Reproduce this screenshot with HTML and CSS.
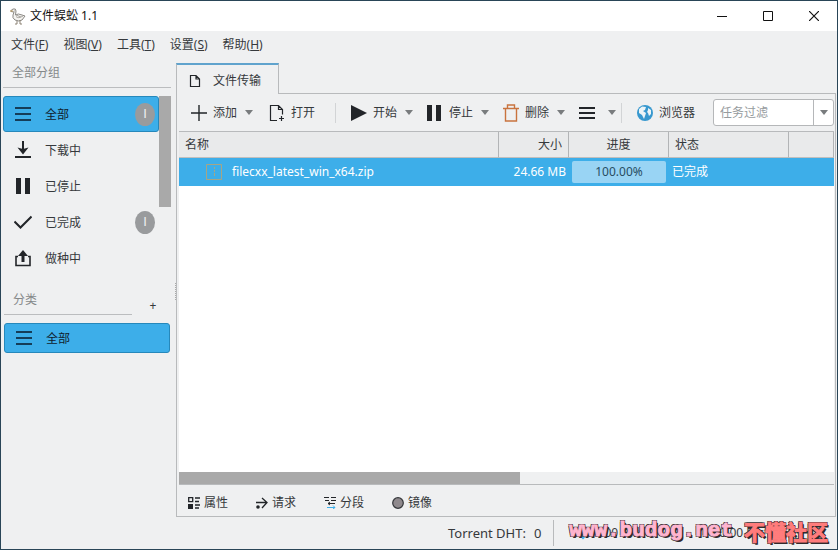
FILE: index.html
```html
<!DOCTYPE html>
<html lang="zh-CN">
<head>
<meta charset="utf-8">
<title>文件蜈蚣 1.1</title>
<link rel="stylesheet" href="styles.css">
</head>
<body>
<div class="window">
  <header class="titlebar">
    <svg class="logo" viewBox="0 0 18 18" width="18" height="18"><path d="M2 3.500 4 2Q7 1 7 4L6.500 8Q9 6 13 8L16 9 13 13Q10 15 6 13 3 11 4 8L5 5 2 4.500Z" fill="#f4f3f0" stroke="#8b8985"/><path d="M7 9.500Q9 12 14 9M7 8l5 2M5 4h1" fill="none" stroke="#aaa7a2"/><path d="M8 14v3h-2M11 13v4h2" fill="none" stroke="#8b8172"/><path d="M1 4h3" stroke="#bd9d61"/></svg>
    <h1 class="title">文件蜈蚣 1.1</h1>
    <div class="controls">
      <button class="control" aria-label="最小化"><svg viewBox="0 0 10 10" width="10" height="10"><path d="M0 5.500h10" stroke="#111"/></svg></button>
      <button class="control" aria-label="最大化"><svg viewBox="0 0 10 10" width="10" height="10"><path d="M.5.5h9v9h-9z" fill="none" stroke="#111"/></svg></button>
      <button class="control" aria-label="关闭"><svg viewBox="0 0 10 10" width="10" height="10"><path d="m0 0 10 10M10 0 0 10" stroke="#111" stroke-width="1.200"/></svg></button>
    </div>
  </header>
  <nav class="menubar">
    <button>文件(<u>F</u>)</button><button>视图(<u>V</u>)</button><button>工具(<u>T</u>)</button><button>设置(<u>S</u>)</button><button>帮助(<u>H</u>)</button>
  </nav>
  <div class="workspace">
    <aside class="sidebar">
      <h2 class="group-title">全部分组</h2>
      <div class="group-scroll">
        <div class="group-list">
          <button class="group selected"><svg viewBox="0 0 18 18" width="18" height="18"><path d="M1 3h16M1 9h16M1 15h16" stroke="#153d58" stroke-width="2"/></svg><span>全部</span><b class="badge">I</b></button>
          <button class="group"><svg viewBox="0 0 18 18" width="18" height="18"><path d="M9 0v9M1 16h16" stroke="#222529" stroke-width="2"/><path d="m3.500 6.500 5.500 7 5.500-7-5.500 1.500z" fill="#222529"/></svg><span>下载中</span></button>
          <button class="group"><svg viewBox="0 0 18 18" width="18" height="18"><path d="M2 1h5v16H2zM11 1h5v16h-5z" fill="#222529"/></svg><span>已停止</span></button>
          <button class="group"><svg viewBox="0 0 18 18" width="18" height="18"><path d="m.5 8.500 6 6 11-11" fill="none" stroke="#222529" stroke-width="2"/></svg><span>已完成</span><b class="badge">I</b></button>
          <button class="group"><svg viewBox="0 0 18 18" width="18" height="18"><path d="M4 7.500H2v9h14v-9h-2" fill="none" stroke="#222529" stroke-width="1.600"/><path d="M9 13V4" stroke="#222529" stroke-width="3"/><path d="m9 1 5 6H4z" fill="#222529"/></svg><span>做种中</span></button>
        </div>
        <div class="group-thumb"></div>
      </div>
      <div class="category-head"><h2 class="category-title">分类</h2><button class="add-category" aria-label="添加分类">+</button></div>
      <button class="category"><svg viewBox="0 0 18 18" width="18" height="18"><path d="M1 3h16M1 9h16M1 15h16" stroke="#153d58" stroke-width="2"/></svg><span>全部</span></button>
      <i class="splitter"></i>
    </aside>
    <main class="content">
      <div class="tabs"><button class="tab"><svg viewBox="0 0 12 14" width="12" height="14"><path d="M1.500 1.500H7L10.500 5v7.500h-9zM7 1.500V5h3.500" fill="none" stroke="#222529" stroke-width="1.200"/></svg>文件传输</button></div>
      <section class="panel">
        <div class="toolbar">
          <button class="tool add"><svg viewBox="0 0 16 16" width="16" height="16"><path d="M8 0v16M0 8h16" stroke="#222529" stroke-width="1.400"/></svg>添加<i class="caret"></i></button>
          <button class="tool open"><svg viewBox="0 0 16 18" width="16" height="18"><path d="M8 16.500H1.500v-15h8l4 4v5M9.500 1.500v4h4M12.500 12v5M10 14.500h5" fill="none" stroke="#222529" stroke-width="1.200"/></svg>打开</button>
          <i class="separator"></i>
          <button class="tool start"><svg viewBox="0 0 16 16" width="16" height="16"><path d="m0 0 16 8-16 8z" fill="#222529"/></svg>开始<i class="caret"></i></button>
          <button class="tool stop"><svg viewBox="0 0 16 16" width="16" height="16"><path d="M0 0h5v16H0zM9 0h5v16H9z" fill="#222529"/></svg>停止<i class="caret"></i></button>
          <button class="tool remove"><svg viewBox="0 0 16 18" width="16" height="18"><path d="M0 4.500h16M4.500 4V1h7v3M2.500 5v12h11V5" fill="none" stroke="#c9733e" stroke-width="1.400"/></svg>删除<i class="caret"></i></button>
          <button class="tool more" aria-label="更多"><svg viewBox="0 0 16 16" width="16" height="16"><path d="M0 3h16M0 8h16M0 13h16" stroke="#222529" stroke-width="2"/></svg><i class="caret"></i></button>
          <i class="separator last"></i>
          <button class="tool browser"><svg viewBox="0 0 16 16" width="16" height="16"><circle cx="8" cy="8" r="8" fill="#3798cf"/><path d="m2 4 3-2.500 4 .5-1 3-2 1 3 2-1 3-1 3-2-4-3-2zM11 3l3 2v4l-2 2-1-3-1-1 1-2z" fill="#ecf4f7"/></svg>浏览器</button>
          <div class="filter"><input aria-label="任务过滤" placeholder="任务过滤"><button aria-label="过滤选项"><i class="caret"></i></button></div>
        </div>
        <div class="files">
          <table>
            <colgroup><col><col class="size-col"><col class="progress-col"><col class="status-col"><col class="extra-col"></colgroup>
            <thead><tr><th>名称</th><th class="size">大小</th><th class="center">进度</th><th>状态</th><th></th></tr></thead>
            <tbody><tr><td><div class="filename"><svg viewBox="0 0 16 16" width="16" height="16"><path d="M.5.5h15v15H.5zM8.500 3v2M8.500 6v2M8.500 9v3" fill="none" stroke="#a6a585"/></svg>filecxx_latest_win_x64.zip</div></td><td class="size">24.66 MB</td><td class="progress-cell"><div class="progress">100.00%</div></td><td class="state">已完成</td><td></td></tr></tbody>
          </table>
          <div class="horizontal-scroll"><div class="horizontal-thumb"></div></div>
        </div>
        <nav class="details">
          <button><svg viewBox="0 0 12 12" width="12" height="12"><path d="M.7.7h4v4h-4zM7 1h5M7 4.500h4M7 8h5M7 11h4" fill="none" stroke="#222529" stroke-width="1.300"/><path d="M0 7h5v5H0z" fill="#222529"/></svg>属性</button>
          <button><svg viewBox="0 0 12 12" width="12" height="12"><path d="M0 5.500h11M6 1l5 4.500L6 11" fill="none" stroke="#222529" stroke-width="1.300"/><circle cx="2" cy="10" r="1.800" fill="#222529"/></svg>请求</button>
          <button><svg viewBox="0 0 12 12" width="12" height="12"><path d="M0 .5h5M7 .5h5M1 3.500h4M7 3.500h5M4 6.500h7M6 5 4 6.500 6 8" fill="none" stroke="#222529"/><path d="M3 10.500h8M9 8.500l2 2-2 1.500" fill="none" stroke="#3daee9"/></svg>分段</button>
          <button><svg viewBox="0 0 12 12" width="12" height="12"><circle cx="6" cy="6" r="5.300" fill="#8f898d" stroke="#34363a" stroke-width="1.200"/></svg>镜像</button>
        </nav>
      </section>
    </main>
  </div>
  <footer class="status"><span class="dht">Torrent DHT:</span><span class="dht-value">0</span><span class="speed"><svg viewBox="0 0 10 14" width="10" height="14"><path d="M5 0v12M1 8l4 4 4-4" fill="none" stroke="#3daee9" stroke-width="2"/></svg>0.00 B/s</span><span class="speed upload">0.00 B/s</span></footer>
  <div class="watermark"><span class="site">www.budog.net</span><span class="community">不懂社区</span></div>
</div>
</body>
</html>
```
FILE: styles.css
```css
* { box-sizing: border-box; }
body { margin: 0; color: #36393c; background: #eff0f1; font: 12px/18px "Noto Sans", "Noto Sans CJK SC", sans-serif; }
button, input { font: inherit; color: inherit; }
button { border: 0; background: none; padding: 0; }
svg { display: block; flex-shrink: 0; }
h1, h2 { margin: 0; font-size: 12px; font-weight: 400; }
.window { position: relative; display: flex; flex-direction: column; min-height: 100vh; border: 1px solid #294557; background: #eff0f1; }
.titlebar { display: flex; align-items: center; height: 30px; padding-left: 8px; background: #fff; color: #111; }
.title { margin-left: 3px; }
.controls { display: flex; margin-left: auto; }
.control { display: grid; place-items: center; width: 46px; height: 28px; }
.menubar { display: flex; gap: 15px; height: 27px; padding-left: 10px; }
.workspace { display: flex; flex: 1; }
.sidebar { position: relative; width: 175px; flex-shrink: 0; padding: 0 5px 0 2px; }
.group-title { height: 30px; padding: 6px 9px; border-bottom: 1px solid #bbbdbf; color: #85898a; }
.group-scroll { display: flex; align-items: flex-start; margin-top: 8px; }
.group-list { flex: 1; }
.group, .category { display: flex; align-items: center; gap: 13px; width: 100%; height: 36px; padding: 0 4px 0 11px; text-align: left; }
.group span, .category span { padding-top: 2px; }
.selected, .category { border: 1px solid #2688bb; border-radius: 3px; background: #3daee9; color: #10212d; }
.selected { padding: 0 3px 0 10px; }
.badge { display: grid; place-items: center; width: 20px; height: 23px; margin-left: auto; border-radius: 50%; background: #999b9d; color: #eff0f1; font-family: "Liberation Sans", sans-serif; font-size: 13px; font-weight: 400; }
.group-thumb { width: 12px; height: 111px; background: #a9a9a9; }
.category-head { display: flex; justify-content: space-between; height: 39px; margin: 8px 0 0 1px; }
.category-title { width: 128px; height: 31px; padding: 7px 9px; border-bottom: 1px solid #bbbdbf; color: #85898a; }
.add-category { width: 20px; margin-right: 8px; padding-top: 4px; }
.category { width: calc(100% - 2px); height: 30px; margin-left: 1px; padding-left: 10px; }
.splitter { position: absolute; right: 0; top: 225px; height: 17px; border-right: 1px dotted #aaa; }
.content { display: flex; flex: 1; flex-direction: column; min-width: 0; padding: 5px 1px 0 0; }
.tabs { height: 30px; position: relative; z-index: 1; }
.tab { display: flex; align-items: center; gap: 12px; height: 31px; padding: 2px 17px 0 12px; border: 1px solid #b8babc; border-top: 2px solid #60a3cd; border-bottom: 0; background: #eff0f1; }
.panel { display: flex; flex: 1; flex-direction: column; border: 1px solid #b8babc; padding: 0 1px 0 2px; }
.toolbar { display: flex; align-items: center; height: 37px; padding-left: 12px; }
.tool { display: flex; align-items: center; gap: 6px; height: 30px; white-space: nowrap; }
.caret { width: 0; border: 4px solid transparent; border-top: 5px solid #797c7e; border-bottom: 0; }
.tool .caret { margin-left: 2px; }
.open { margin-left: 16px; }
.separator { width: 1px; height: 20px; margin-left: 20px; background: #d2d4d6; }
.start { margin-left: 15px; }
.stop, .remove, .more { margin-left: 14px; }
.tool.more .caret { margin-left: 7px; }
.last { margin-left: 5px; }
.browser { margin-left: 15px; }
.filter { display: flex; flex: 1; height: 27px; margin-left: 18px; border: 1px solid #b5b7b9; border-radius: 3px; background: #fff; }
.filter input { width: 0; flex: 1; border: 0; background: none; padding: 0 6px; }
.filter input::placeholder { color: #969b9e; }
.filter button { display: grid; place-items: center; width: 20px; border-left: 1px solid #b5b7b9; }
.files { display: flex; flex: 1; flex-direction: column; background: #fff; border: 1px solid #b8babc; border-width: 1px 0; }
table { width: 100%; table-layout: fixed; border-collapse: separate; border-spacing: 0; }
.size-col { width: 70px; }
.progress-col { width: 100px; }
.status-col { width: 120px; }
.extra-col { width: 45px; }
th { height: 26px; padding: 0 6px; border-right: 1px solid #b2b4b6; border-bottom: 1px solid #c1bfbe; background: #e9eaeb; font-weight: 400; text-align: left; }
td { height: 28px; padding: 0 3px; background: #3daee9; color: #fff; }
.size { text-align: right; }
.center { text-align: center; }
.filename { display: flex; align-items: center; gap: 10px; padding-left: 24px; }
.progress { height: 22px; border-radius: 2px; background: #99d4f4; color: #284d63; line-height: 22px; text-align: center; }
.horizontal-scroll { margin-top: auto; height: 12px; background: #eff0f1; }
.horizontal-thumb { width: 52%; height: 12px; background: #a9a9a9; }
.details { display: flex; gap: 28px; height: 31px; padding: 4px 9px 0; }
.details button { display: flex; align-items: center; gap: 4px; }
.status { display: flex; align-items: center; height: 32px; padding-left: 447px; font-size: 13px; white-space: nowrap; }
.dht-value { margin-left: 8px; padding-right: 12px; border-right: 1px solid #b8babc; line-height: 26px; }
.speed { display: flex; align-items: center; gap: 6px; margin-left: 24px; font-size: 12px; }
.upload { margin-left: 80px; }
.watermark { position: absolute; right: 9px; bottom: 4px; display: flex; align-items: center; gap: 11px; font-size: 21px; font-weight: 700; line-height: 28px; white-space: nowrap; -webkit-text-stroke: 1px currentColor; text-shadow: -1px -1px #302a2d, 1px -1px #302a2d, -1px 1px #302a2d, 1px 1px #302a2d, 2px 2px #302a2d; }
.site { color: #ffb5cf; font-family: "Liberation Mono", monospace; }
.community { color: #ff7c7c; font-family: "Noto Sans CJK SC", sans-serif; }
```
